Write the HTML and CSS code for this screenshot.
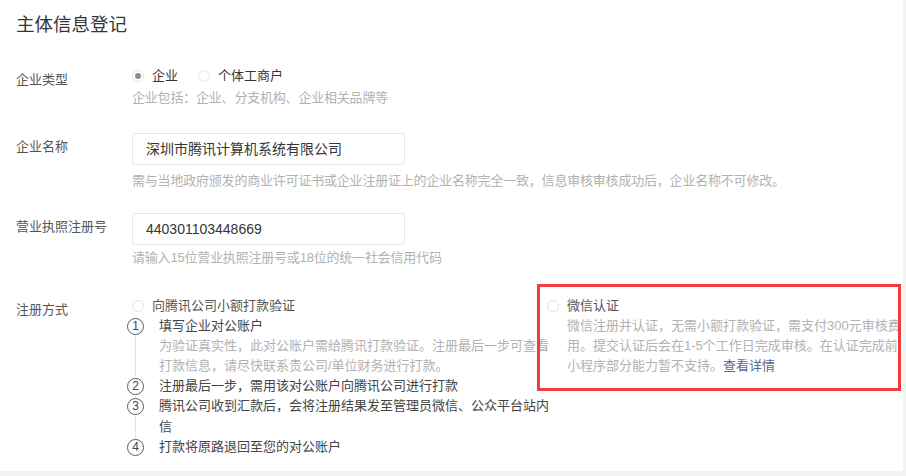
FILE: index.html
```html
<!DOCTYPE html>
<html lang="zh-CN">
<head>
<meta charset="utf-8">
<title>主体信息登记</title>
<link rel="stylesheet" href="styles.css">
</head>
<body>
<div class="panel">
  <h2 class="title">主体信息登记</h2>
  <div class="form">
    <div class="row row-type">
      <div class="label">企业类型</div>
      <div class="field">
        <div class="radios">
          <span class="radio checked"><span class="dot"></span>企业</span>
          <span class="radio"><span class="dot"></span>个体工商户</span>
        </div>
        <p class="hint">企业包括：企业、分支机构、企业相关品牌等</p>
      </div>
    </div>

    <div class="row row-name">
      <div class="label">企业名称</div>
      <div class="field">
        <div class="input">深圳市腾讯计算机系统有限公司</div>
        <p class="hint hint-input">需与当地政府颁发的商业许可证书或企业注册证上的企业名称完全一致，信息审核审核成功后，企业名称不可修改。</p>
      </div>
    </div>

    <div class="row row-license">
      <div class="label">营业执照注册号</div>
      <div class="field">
        <div class="input">440301103448669</div>
        <p class="hint hint-input2">请输入15位营业执照注册号或18位的统一社会信用代码</p>
      </div>
    </div>

    <div class="row row-method">
      <div class="label">注册方式</div>
      <div class="field options">
        <div class="option option-left">
          <span class="radio"><span class="dot"></span>向腾讯公司小额打款验证</span>
          <ol class="steps">
            <li class="step">
              <div class="mark"><span class="line line-top hidden"></span><span class="num">1</span><span class="line line-bottom"></span></div>
              <div class="step-body">
                <div class="step-title">填写企业对公账户</div>
                <div class="step-desc">为验证真实性，此对公账户需给腾讯打款验证。注册最后一步可查看打款信息，请尽快联系贵公司/单位财务进行打款。</div>
              </div>
            </li>
            <li class="step">
              <div class="mark"><span class="line line-top"></span><span class="num">2</span><span class="line line-bottom"></span></div>
              <div class="step-body"><div class="step-title">注册最后一步，需用该对公账户向腾讯公司进行打款</div></div>
            </li>
            <li class="step">
              <div class="mark"><span class="line line-top"></span><span class="num">3</span><span class="line line-bottom"></span></div>
              <div class="step-body"><div class="step-title">腾讯公司收到汇款后，会将注册结果发至管理员微信、公众平台站内信</div></div>
            </li>
            <li class="step">
              <div class="mark"><span class="line line-top"></span><span class="num">4</span><span class="line line-bottom hidden"></span></div>
              <div class="step-body"><div class="step-title">打款将原路退回至您的对公账户</div></div>
            </li>
          </ol>
        </div>
        <div class="option option-right">
          <span class="radio"><span class="dot"></span>微信认证</span>
          <p class="option-desc">微信注册并认证，无需小额打款验证，需支付300元审核费用。提交认证后会在1-5个工作日完成审核。在认证完成前小程序部分能力暂不支持。<a class="link" href="#">查看详情</a></p>
          <div class="highlight"></div>
        </div>
      </div>
    </div>
  </div>
</div>
</body>
</html>
```

FILE: styles.css
```css
html {
  background: #f3f3f4;
}
body {
  margin: 0;
  font-family: "Liberation Sans", "Noto Sans CJK SC", sans-serif;
  color: #353535;
  font-size: 13px;
}
.panel {
  width: 903px;
  height: 471px;
  background: #fff;
  box-sizing: border-box;
  padding: 13px 0 0 16px;
  overflow: hidden;
}
.title {
  margin: 0;
  font-size: 18.5px;
  line-height: 24px;
  font-weight: normal;
  color: #353535;
}
.form {
  margin-top: 29px;
}
.row {
  display: flex;
}
.label {
  width: 116px;
  flex: none;
  padding-top: 4px;
  line-height: 20px;
  color: #555;
}
.field {
  line-height: 20px;
}
.row-name {
  margin-top: 25px;
}
.row-license {
  margin-top: 22px;
}
.row-method {
  margin-top: 28px;
}
.radios {
  display: flex;
  gap: 20px;
}
.radio {
  display: flex;
  align-items: center;
  color: #353535;
}
.dot {
  width: 12px;
  height: 12px;
  box-sizing: border-box;
  border: 1px solid #e2e2e2;
  border-radius: 50%;
  margin-right: 8px;
  display: flex;
  align-items: center;
  justify-content: center;
}
.checked .dot::after {
  content: "";
  width: 6px;
  height: 6px;
  border-radius: 50%;
  background: #8c8c8c;
}
.hint {
  margin: 2px 0 0;
  color: #b2b2b2;
  letter-spacing: -0.2px;
}
.hint-input {
  margin-top: 6px;
}
.hint-input2 {
  margin-top: 3px;
}
.input {
  width: 273px;
  height: 32px;
  box-sizing: border-box;
  border: 1px solid #e7e7eb;
  border-radius: 3px;
  padding: 0 13px;
  font-size: 14px;
  line-height: 30px;
  color: #353535;
}
.options {
  display: flex;
}
.option-left {
  flex: none;
  width: 415px;
}
.option-left .radio {
  color: #555;
}
.steps {
  list-style: none;
  margin: 0 0 0 -5px;
  padding: 0;
}
.step {
  display: flex;
}
.step:nth-child(n+3) {
  line-height: 20.5px;
}
.mark {
  flex: none;
  width: 17px;
  margin-right: 15px;
  display: flex;
  flex-direction: column;
  align-items: center;
}
.line {
  width: 1px;
  background: #e4e4e4;
}
.line-top {
  height: 2px;
}
.line-bottom {
  flex: 1;
}
.hidden {
  visibility: hidden;
}
.num {
  width: 17px;
  height: 17px;
  box-sizing: border-box;
  border: 1.5px solid #5a5a5a;
  border-radius: 50%;
  font-size: 12px;
  line-height: 14px;
  text-align: center;
  color: #444;
  flex: none;
}
.step-body {
  width: 394px;
  flex: none;
}
.step-title {
  color: #444;
}
.step-desc {
  color: #b2b2b2;
}
.option-right {
  position: relative;
  flex: none;
  width: 356px;
}
.option-right .radio {
  color: #555;
}
.option-desc {
  margin: 0 0 0 20px;
  width: 336px;
  color: #b2b2b2;
}
.link {
  color: #576b95;
  text-decoration: none;
}
.highlight {
  position: absolute;
  left: -10px;
  top: -12px;
  width: 364px;
  height: 107px;
  box-sizing: border-box;
  border: 3px solid #f03c3c;
  pointer-events: none;
}
```
